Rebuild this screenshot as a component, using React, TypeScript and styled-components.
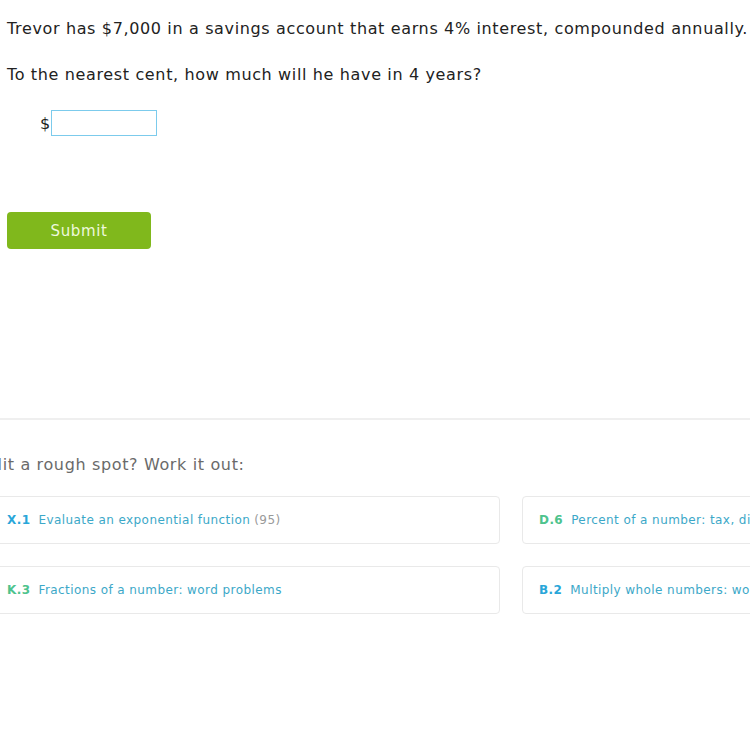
import React from "react";
import styled, { createGlobalStyle } from "styled-components";

const Global = createGlobalStyle`
  html, body { margin: 0; padding: 0; background: #fff; }
  body { width: 750px; overflow: hidden; font-family: "DejaVu Sans", Verdana, sans-serif; }
`;

const Page = styled.div`
  width: 750px;
  overflow: hidden;
  padding-top: 20px;
`;

const Question = styled.div`
  display: flex;
  flex-direction: column;
  align-items: flex-start;
  gap: 28px;
  padding-left: 7px;
  color: #222;
  font-size: 16px;
  letter-spacing: 0.64px;
`;

const Para = styled.p`
  margin: 0;
  line-height: 18px;
  white-space: nowrap;
`;

const AnswerRow = styled.div`
  display: flex;
  align-items: center;
  padding-left: 40px;
  margin-top: 26px;
`;

const Dollar = styled.span`
  font-size: 16px;
  color: #222;
  margin-right: 1px;
`;

const Input = styled.input`
  box-sizing: border-box;
  width: 106px;
  height: 26px;
  border: 1px solid #7ccbec;
  outline: none;
  margin: 0;
`;

const Actions = styled.div`
  padding-left: 7px;
  margin-top: 76px;
`;

const Submit = styled.button`
  display: block;
  width: 144px;
  height: 37px;
  border: none;
  border-radius: 4px;
  background: #80b81c;
  color: #eef8dc;
  font-family: "DejaVu Sans", Verdana, sans-serif;
  font-size: 15px;
  letter-spacing: 0.6px;
  cursor: pointer;
`;

const Divider = styled.hr`
  margin: 169px 0 0 0;
  border: none;
  height: 2px;
  background: #efefef;
`;

const Help = styled.section`
  margin-left: -10px;
  padding-top: 36px;
`;

const HelpTitle = styled.div`
  font-size: 16px;
  letter-spacing: 0.64px;
  color: #6a6a6a;
  line-height: 18px;
  margin-bottom: 22px;
  white-space: nowrap;
`;

const Grid = styled.div`
  display: grid;
  grid-template-columns: 510px 510px;
  column-gap: 22px;
  row-gap: 22px;
`;

const Card = styled.a`
  box-sizing: border-box;
  height: 48px;
  border: 1px solid #e9e9e9;
  border-radius: 4px;
  display: flex;
  align-items: center;
  padding-left: 16px;
  font-size: 12px;
  letter-spacing: 0.42px;
  white-space: nowrap;
  overflow: hidden;
  text-decoration: none;
`;

const Code = styled.span<{ $tone: "blue" | "green" }>`
  font-weight: bold;
  color: ${(p) => (p.$tone === "blue" ? "#29a6d9" : "#4ec38d")};
  margin-right: 8px;
`;

const Name = styled.span`
  color: #3ca8c8;
`;

const Count = styled.span`
  color: #9a9a9a;
  margin-left: 4px;
`;

const skills = [
  { code: "X.1", tone: "blue" as const, name: "Evaluate an exponential function", count: "(95)" },
  { code: "D.6", tone: "green" as const, name: "Percent of a number: tax, discount, and more" },
  { code: "K.3", tone: "green" as const, name: "Fractions of a number: word problems" },
  { code: "B.2", tone: "blue" as const, name: "Multiply whole numbers: word problems" },
];

export default function App() {
  return (
    <>
      <Global />
      <Page>
        <Question>
          <Para>Trevor has $7,000 in a savings account that earns 4% interest, compounded annually.</Para>
          <Para>To the nearest cent, how much will he have in 4 years?</Para>
        </Question>
        <AnswerRow>
          <Dollar>$</Dollar>
          <Input type="text" />
        </AnswerRow>
        <Actions>
          <Submit>Submit</Submit>
        </Actions>
        <Divider />
        <Help>
          <HelpTitle>Hit a rough spot? Work it out:</HelpTitle>
          <Grid>
            {skills.map((s) => (
              <Card key={s.code} href="#">
                <Code $tone={s.tone}>{s.code}</Code>
                <Name>{s.name}</Name>
                {s.count && <Count>{s.count}</Count>}
              </Card>
            ))}
          </Grid>
        </Help>
      </Page>
    </>
  );
}
